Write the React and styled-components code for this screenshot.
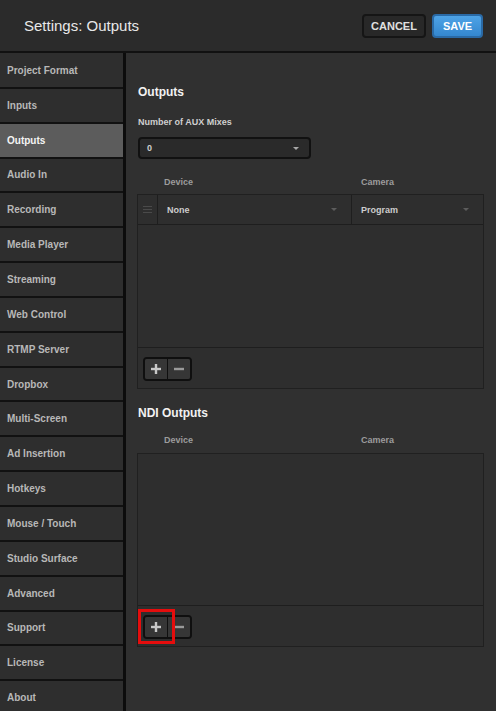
import React from 'react';
import styled, { createGlobalStyle } from 'styled-components';

const GlobalStyle = createGlobalStyle`
  body {
    margin: 0;
    background: #303030;
    font-family: "Liberation Sans", Arial, sans-serif;
  }
`;

const Page = styled.div`
  width: 496px;
  height: 711px;
  display: flex;
  flex-direction: column;
  overflow: hidden;
  background: #303030;
`;

const Header = styled.div`
  height: 51px;
  border-bottom: 2px solid #111;
  background: #2b2b2b;
  display: flex;
  align-items: center;
  justify-content: space-between;
  padding: 0 13px 0 24px;
`;

const Title = styled.div`
  color: #e8e8e8;
  font-size: 15px;
`;

const HeaderButtons = styled.div`
  display: flex;
  gap: 6px;
`;

const HeaderButton = styled.button`
  height: 24px;
  width: ${p => p.$w}px;
  border-radius: 4px;
  font-family: "Liberation Sans", Arial, sans-serif;
  font-weight: bold;
  font-size: 11px;
  padding: 0;
  border: 2px solid ${p => (p.$primary ? '#2a6aa6' : '#151515')};
  background: ${p => (p.$primary ? 'linear-gradient(#4ea3e6, #3487cf)' : '#282828')};
  color: ${p => (p.$primary ? '#fff' : '#e0e0e0')};
`;

const Body = styled.div`
  flex: 1;
  display: flex;
  min-height: 0;
`;

const Sidebar = styled.div`
  width: 123px;
  padding-top: 1px;
  border-right: 3px solid #0c0c0c;
  background: #2e2e2e;
  display: flex;
  flex-direction: column;
`;

const NavItem = styled.div`
  height: 32.85px;
  flex-shrink: 0;
  border-bottom: 2px solid #111;
  display: flex;
  align-items: center;
  padding-left: 7px;
  font-size: 10px;
  font-weight: bold;
  color: ${p => (p.$active ? '#f4f4f4' : '#b8b8b8')};
  background: ${p => (p.$active ? '#5c5c5c' : '#2e2e2e')};
`;

const Content = styled.div`
  flex: 1;
  padding: 32px 12px 0 11px;
  display: flex;
  flex-direction: column;
`;

const SectionTitle = styled.div`
  margin: ${p => p.$top || 0}px 0 0 1px;
  line-height: 14px;
  font-size: 12px;
  font-weight: bold;
  color: #f2f2f2;
`;

const FieldLabel = styled.div`
  margin: 17px 0 0 1px;
  line-height: 12px;
  font-size: 9px;
  font-weight: bold;
  color: #cfcfcf;
`;

const Select = styled.div`
  margin: 9px 0 0 1px;
  width: 152px;
  height: 18px;
  border: 2px solid #111;
  border-radius: 4px;
  background: #2a2a2a;
  display: flex;
  align-items: center;
  justify-content: space-between;
  padding: 0 10px 0 7px;
  font-size: 9px;
  font-weight: bold;
  color: #cfcfcf;
  box-sizing: content-box;
`;

const Caret = styled.span`
  width: 0;
  height: 0;
  border-left: 3px solid transparent;
  border-right: 3px solid transparent;
  border-top: 3px solid ${p => p.$color || '#a8a8a8'};
`;

const Columns = styled.div`
  display: grid;
  grid-template-columns: 20px 194px 1fr;
`;

const ColHeader = styled(Columns)`
  margin-top: ${p => p.$top}px;
  height: ${p => p.$h}px;
  padding-bottom: 3px;
  box-sizing: border-box;
  align-items: center;
  font-size: 9px;
  font-weight: bold;
  color: #9c9c9c;
`;

const HeadCell = styled.div`
  grid-column: ${p => p.$col};
  padding-left: ${p => p.$pad}px;
`;

const TableBox = styled.div`
  border: 1px solid #202020;
  background: #2e2e2e;
  display: flex;
  flex-direction: column;
`;

const Row = styled(Columns)`
  height: 29px;
  border-bottom: 1px solid #1e1e1e;
`;

const Handle = styled.div`
  border-right: 1px solid #1e1e1e;
  display: flex;
  align-items: center;
  justify-content: center;
`;

const Cell = styled.div`
  display: flex;
  align-items: center;
  justify-content: space-between;
  padding: 0 14px 0 9px;
  font-size: 9px;
  font-weight: bold;
  color: #cdcdcd;
  border-right: ${p => (p.$divider ? '1px solid #1e1e1e' : 'none')};
`;

const TableBody = styled.div`
  height: ${p => p.$h}px;
`;

const Footer = styled.div`
  position: relative;
  height: 41px;
  border-top: 1px solid #1e1e1e;
  padding: 9px 0 0 5px;
  box-sizing: border-box;
`;

const ButtonGroup = styled.div`
  display: inline-flex;
  border: 2px solid #0f0f0f;
  border-radius: 4px;
  overflow: hidden;
`;

const IconButton = styled.div`
  width: 22px;
  height: 20px;
  background: #363636;
  display: flex;
  align-items: center;
  justify-content: center;
  border-left: ${p => (p.$split ? '1px solid #0f0f0f' : 'none')};
`;

const Highlight = styled.div`
  position: absolute;
  left: 0;
  top: 3px;
  width: 37px;
  height: 35px;
  border: 3px solid #e50d0d;
  box-sizing: border-box;
`;

const navItems = [
  'Project Format', 'Inputs', 'Outputs', 'Audio In', 'Recording', 'Media Player',
  'Streaming', 'Web Control', 'RTMP Server', 'Dropbox', 'Multi-Screen',
  'Ad Insertion', 'Hotkeys', 'Mouse / Touch', 'Studio Surface', 'Advanced',
  'Support', 'License', 'About',
];

const Plus = () => (
  <svg width="10" height="10" viewBox="0 0 10 10">
    <rect x="3.8" y="0" width="2.4" height="10" fill="#c8c8c8" />
    <rect x="0" y="3.8" width="10" height="2.4" fill="#c8c8c8" />
  </svg>
);

const Minus = () => (
  <svg width="10" height="10" viewBox="0 0 10 10">
    <rect x="0" y="3.8" width="10" height="2.4" fill="#9a9a9a" />
  </svg>
);

const Burger = () => (
  <svg width="9" height="8" viewBox="0 0 9 8">
    <rect y="0" width="9" height="1" fill="#4a4a4a" />
    <rect y="3" width="9" height="1" fill="#4a4a4a" />
    <rect y="6" width="9" height="1" fill="#4a4a4a" />
  </svg>
);

const AddRemove = ({ highlight }) => (
  <Footer>
    <ButtonGroup>
      <IconButton><Plus /></IconButton>
      <IconButton $split><Minus /></IconButton>
    </ButtonGroup>
    {highlight && <Highlight />}
  </Footer>
);

const App = () => {
  return (
    <Page>
      <GlobalStyle />
      <Header>
        <Title>Settings: Outputs</Title>
        <HeaderButtons>
          <HeaderButton $w={64}>CANCEL</HeaderButton>
          <HeaderButton $w={51} $primary>SAVE</HeaderButton>
        </HeaderButtons>
      </Header>
      <Body>
        <Sidebar>
          {navItems.map(item => (
            <NavItem key={item} $active={item === 'Outputs'}>{item}</NavItem>
          ))}
        </Sidebar>
        <Content>
          <SectionTitle>Outputs</SectionTitle>
          <FieldLabel>Number of AUX Mixes</FieldLabel>
          <Select>
            <span>0</span>
            <Caret />
          </Select>
          <ColHeader $top={13} $h={22}>
            <HeadCell $col={2} $pad={7}>Device</HeadCell>
            <HeadCell $col={3} $pad={10}>Camera</HeadCell>
          </ColHeader>
          <TableBox>
            <Row>
              <Handle><Burger /></Handle>
              <Cell $divider>
                <span>None</span>
                <Caret $color="#5c5c5c" />
              </Cell>
              <Cell>
                <span>Program</span>
                <Caret $color="#5c5c5c" />
              </Cell>
            </Row>
            <TableBody $h={122} />
            <AddRemove />
          </TableBox>

          <SectionTitle $top={17}>NDI Outputs</SectionTitle>
          <ColHeader $top={10} $h={23}>
            <HeadCell $col={2} $pad={7}>Device</HeadCell>
            <HeadCell $col={3} $pad={10}>Camera</HeadCell>
          </ColHeader>
          <TableBox>
            <TableBody $h={151} />
            <AddRemove highlight />
          </TableBox>
        </Content>
      </Body>
    </Page>
  );
};

export default App;
